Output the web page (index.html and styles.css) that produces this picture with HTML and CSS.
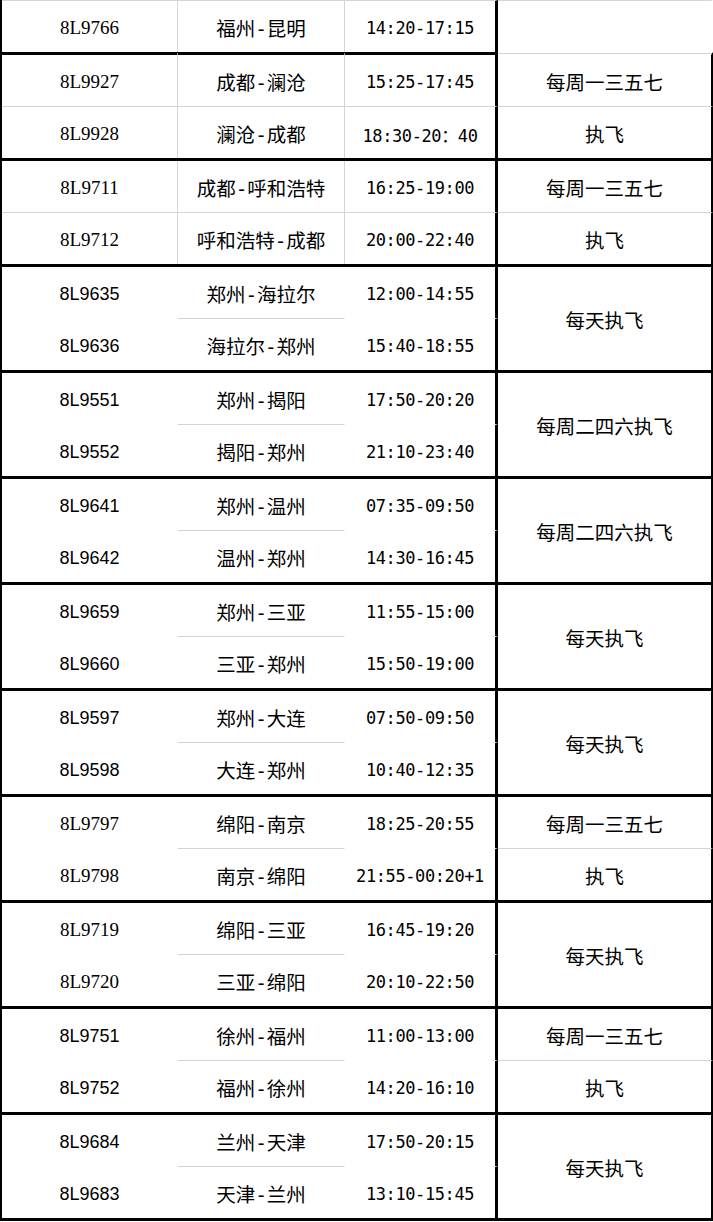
FILE: index.html
```html
<!DOCTYPE html>
<html lang="zh-CN">
<head>
<meta charset="utf-8">
<title>航班计划</title>
<link rel="stylesheet" href="styles.css">
</head>
<body>
<div class="sheet">
  <div class="group first">
    <div class="cell c1 fn serif">8L9766</div>
    <div class="cell c2 route">福州-昆明</div>
    <div class="cell c3 time">14:20-17:15</div>
    <div class="cell c4 blank"></div>
  </div>

  <div class="group full soft">
    <div class="cell c1 fn serif">8L9927</div>
    <div class="cell c2 route">成都-澜沧</div>
    <div class="cell c3 time">15:25-17:45</div>
    <div class="cell c4 freq">每周一三五七</div>
    <div class="cell c1 r2 fn serif">8L9928</div>
    <div class="cell c2 r2 route">澜沧-成都</div>
    <div class="cell c3 r2 time">18:30-20：40</div>
    <div class="cell c4 r2 freq">执飞</div>
  </div>

  <div class="group full">
    <div class="cell c1 fn serif">8L9711</div>
    <div class="cell c2 route">成都-呼和浩特</div>
    <div class="cell c3 time">16:25-19:00</div>
    <div class="cell c4 freq">每周一三五七</div>
    <div class="cell c1 r2 fn serif">8L9712</div>
    <div class="cell c2 r2 route">呼和浩特-成都</div>
    <div class="cell c3 r2 time">20:00-22:40</div>
    <div class="cell c4 r2 freq">执飞</div>
  </div>

  <div class="group">
    <div class="cell c1 fn sans">8L9635</div>
    <div class="cell c2 route">郑州-海拉尔</div>
    <div class="cell c3 time">12:00-14:55</div>
    <div class="cell c4 merged freq">每天执飞</div>
    <div class="cell c1 r2 fn sans">8L9636</div>
    <div class="cell c2 r2 route">海拉尔-郑州</div>
    <div class="cell c3 r2 time">15:40-18:55</div>
  </div>

  <div class="group">
    <div class="cell c1 fn sans">8L9551</div>
    <div class="cell c2 route">郑州-揭阳</div>
    <div class="cell c3 time">17:50-20:20</div>
    <div class="cell c4 merged freq">每周二四六执飞</div>
    <div class="cell c1 r2 fn sans">8L9552</div>
    <div class="cell c2 r2 route">揭阳-郑州</div>
    <div class="cell c3 r2 time">21:10-23:40</div>
  </div>

  <div class="group">
    <div class="cell c1 fn sans">8L9641</div>
    <div class="cell c2 route">郑州-温州</div>
    <div class="cell c3 time">07:35-09:50</div>
    <div class="cell c4 merged freq">每周二四六执飞</div>
    <div class="cell c1 r2 fn sans">8L9642</div>
    <div class="cell c2 r2 route">温州-郑州</div>
    <div class="cell c3 r2 time">14:30-16:45</div>
  </div>

  <div class="group">
    <div class="cell c1 fn sans">8L9659</div>
    <div class="cell c2 route">郑州-三亚</div>
    <div class="cell c3 time">11:55-15:00</div>
    <div class="cell c4 merged freq">每天执飞</div>
    <div class="cell c1 r2 fn sans">8L9660</div>
    <div class="cell c2 r2 route">三亚-郑州</div>
    <div class="cell c3 r2 time">15:50-19:00</div>
  </div>

  <div class="group">
    <div class="cell c1 fn sans">8L9597</div>
    <div class="cell c2 route">郑州-大连</div>
    <div class="cell c3 time">07:50-09:50</div>
    <div class="cell c4 merged freq">每天执飞</div>
    <div class="cell c1 r2 fn sans">8L9598</div>
    <div class="cell c2 r2 route">大连-郑州</div>
    <div class="cell c3 r2 time">10:40-12:35</div>
  </div>

  <div class="group">
    <div class="cell c1 fn serif">8L9797</div>
    <div class="cell c2 route">绵阳-南京</div>
    <div class="cell c3 time">18:25-20:55</div>
    <div class="cell c4 freq">每周一三五七</div>
    <div class="cell c1 r2 fn serif">8L9798</div>
    <div class="cell c2 r2 route">南京-绵阳</div>
    <div class="cell c3 r2 time">21:55-00:20+1</div>
    <div class="cell c4 r2 split freq">执飞</div>
  </div>

  <div class="group">
    <div class="cell c1 fn serif">8L9719</div>
    <div class="cell c2 route">绵阳-三亚</div>
    <div class="cell c3 time">16:45-19:20</div>
    <div class="cell c4 merged freq">每天执飞</div>
    <div class="cell c1 r2 fn serif">8L9720</div>
    <div class="cell c2 r2 route">三亚-绵阳</div>
    <div class="cell c3 r2 time">20:10-22:50</div>
  </div>

  <div class="group">
    <div class="cell c1 fn sans">8L9751</div>
    <div class="cell c2 route">徐州-福州</div>
    <div class="cell c3 time">11:00-13:00</div>
    <div class="cell c4 freq">每周一三五七</div>
    <div class="cell c1 r2 fn sans">8L9752</div>
    <div class="cell c2 r2 route">福州-徐州</div>
    <div class="cell c3 r2 time">14:20-16:10</div>
    <div class="cell c4 r2 split freq">执飞</div>
  </div>

  <div class="group last">
    <div class="cell c1 fn sans">8L9684</div>
    <div class="cell c2 route">兰州-天津</div>
    <div class="cell c3 time">17:50-20:15</div>
    <div class="cell c4 merged freq">每天执飞</div>
    <div class="cell c1 r2 fn sans">8L9683</div>
    <div class="cell c2 r2 route">天津-兰州</div>
    <div class="cell c3 r2 time">13:10-15:45</div>
  </div>
</div>
</body>
</html>
```

FILE: styles.css
```css
html, body {
  margin: 0;
  padding: 0;
  background: #fff;
}

.sheet {
  width: 713px;
  box-sizing: border-box;
  border-left: 2px solid #000;
  border-bottom: 3px solid #000;
  display: flex;
  flex-direction: column;
  color: #000;
}

.group {
  display: grid;
  grid-template-columns: 176px 167px 153px 215px;
  grid-template-rows: 51px 52px;
  border-top: 3px solid #000;
}

.group.first {
  grid-template-rows: 52px;
  border-top: none;
}

.cell {
  box-sizing: border-box;
  display: flex;
  align-items: center;
  justify-content: center;
  padding-top: 3px;
  white-space: nowrap;
}

.c1 { grid-column: 1; }
.c2 { grid-column: 2; }
.c3 { grid-column: 3; }
.c4 { grid-column: 4; }

.c1, .c2 {
  border-right: 1px solid transparent;
}

.c3 {
  border-right: 3px solid #000;
}

.c4 {
  border-right: 2px solid #000;
}

.first .cell {
  border-top: 1px solid #d4d4d4;
}

.first .c1, .first .c2 {
  border-right-color: #d4d4d4;
}

.first .c4 {
  border-right: 2px solid transparent;
}

.full .c1, .full .c2 {
  border-right-color: #d4d4d4;
}

.r2 {
  grid-row: 2;
  border-top: 1px solid transparent;
}

.r2.c2,
.full .r2,
.r2.split {
  border-top-color: #d4d4d4;
}

.merged {
  grid-row: 1 / span 2;
}

/* group 2: its top rule over the last column is only a thin grid line */
.group.soft {
  border-top: none;
  grid-template-rows: 54px 52px;
}

.soft .cell:not(.r2) {
  border-top: 3px solid #000;
}

.soft .c4:not(.r2) {
  border-top-color: transparent;
  background-image: linear-gradient(#d4d4d4, #d4d4d4);
  background-repeat: no-repeat;
  background-size: 100% 1px;
  background-position: 0 1px;
  background-origin: border-box;
}

.fn.serif {
  font-family: "Liberation Serif", "Times New Roman", serif;
  font-size: 19px;
  color: #000;
}

.fn.sans {
  font-family: "Liberation Sans", Arial, sans-serif;
  font-size: 18px;
}

.route {
  font-family: "DejaVu Sans Mono", "Noto Sans CJK SC", sans-serif;
  font-size: 19.5px;
  padding-top: 1px;
}

.freq {
  font-family: "Noto Sans CJK SC", "Noto Sans", sans-serif;
  font-size: 19.5px;
  padding-top: 1px;
}

.time {
  font-family: "DejaVu Sans Mono", "Noto Sans CJK SC", monospace;
  font-size: 17px;
  letter-spacing: -0.4px;
}
```
